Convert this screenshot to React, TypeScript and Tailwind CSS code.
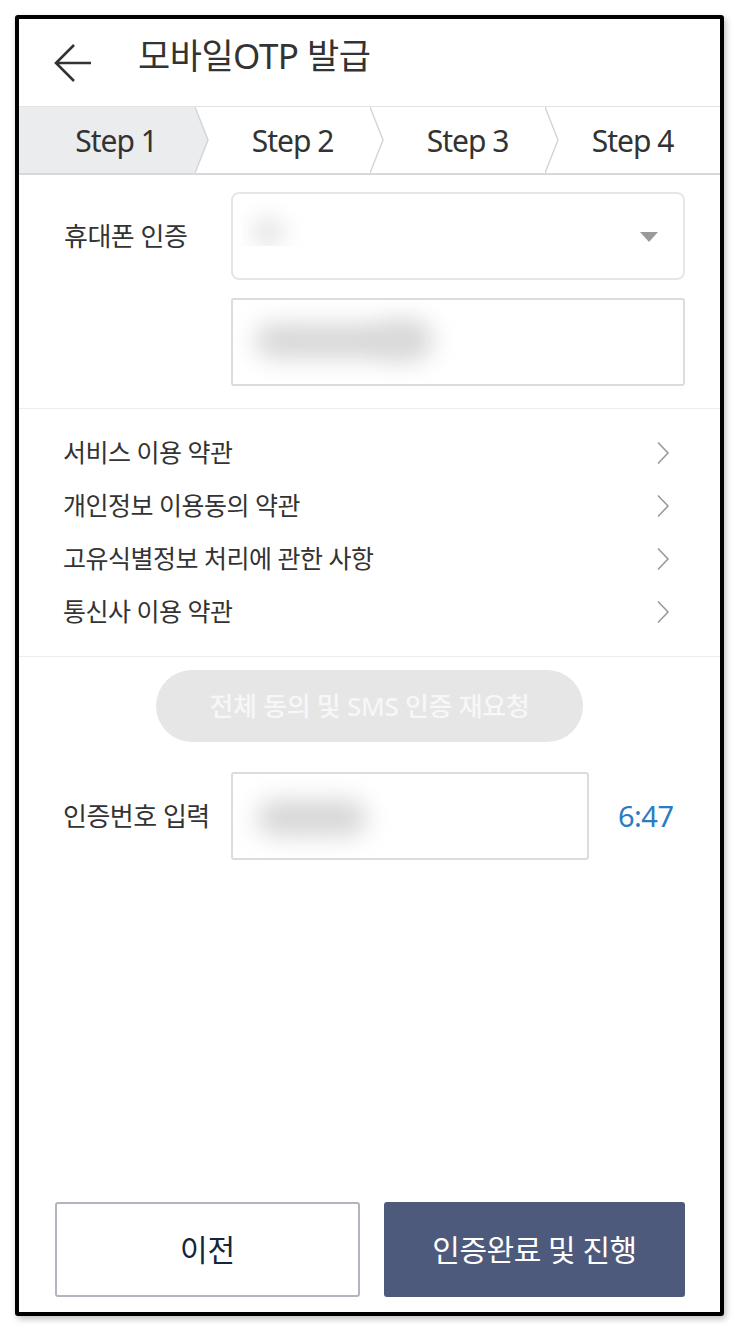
import { ReactNode } from "react";

const terms = [
  "서비스 이용 약관",
  "개인정보 이용동의 약관",
  "고유식별정보 처리에 관한 사항",
  "통신사 이용 약관",
];

const steps = [
  { label: "Step 1", width: "w-[176px]", pad: "pl-[18px]", active: true },
  { label: "Step 2", width: "w-[175px]", pad: "pl-[20px]", active: false },
  { label: "Step 3", width: "w-[175px]", pad: "pl-[20px]", active: false },
  { label: "Step 4", width: "flex-1", pad: "pl-0", active: false },
];

function Chevron() {
  return (
    <svg width="14" height="24" viewBox="0 0 14 24" fill="none">
      <path d="M2 1.5 L12 12 L2 22.5" stroke="#9a9a9a" strokeWidth="1.6" />
    </svg>
  );
}

function Blur({ className }: { className: string }) {
  return <div className={`rounded-full bg-[#d6d6d6] blur-md ${className}`} />;
}

function Row({ label, children }: { label: string; children: ReactNode }) {
  return (
    <div className="flex items-center">
      <div className="w-[212px] shrink-0 pl-[45px] text-[26px] text-[#333] tracking-[-0.5px]">{label}</div>
      {children}
    </div>
  );
}

export default function App() {
  return (
    <div
      className="w-[741px] h-[1335px] bg-white pt-[15px] pl-[15px]"
      style={{ fontFamily: '"Noto Sans", "Noto Sans CJK KR", sans-serif' }}
    >
      <div className="w-[709px] h-[1301px] border-[4px] border-black rounded-[3px] shadow-[2px_3px_6px_rgba(0,0,0,0.25)] flex flex-col bg-white overflow-hidden">
        {/* header */}
        <div className="h-[88px] shrink-0 flex items-center border-b border-[#e3e3e3]">
          <svg width="40" height="40" viewBox="0 0 40 40" fill="none" className="ml-[34px]">
            <path d="M38 20 H3 M21 2 L3 20 L21 38" stroke="#333" strokeWidth="2.6" />
          </svg>
          <h1 className="ml-[45px] text-[35px] leading-none text-[#333] tracking-[-0.5px] -mt-[14px]">
            모바일OTP 발급
          </h1>
        </div>

        {/* steps */}
        <div className="h-[68px] shrink-0 flex border-b-2 border-[#d6d8dc]">
          {steps.map((s, i) => (
            <div
              key={s.label}
              className={`relative ${s.width} ${s.pad} flex items-center justify-center text-[30px] tracking-[-1px] text-[#333] ${s.active ? "bg-[#ebecee]" : "bg-white"}`}
            >
              {s.label}
              {i < steps.length - 1 && (
                <svg
                  width="14"
                  height="66"
                  viewBox="0 0 14 66"
                  className="absolute top-0 -right-[14px] z-10"
                >
                  <polygon points="0,0 13,33 0,66" fill={s.active ? "#ebecee" : "#ffffff"} />
                  <polyline points="0,0 13,33 0,66" fill="none" stroke="#d3d5da" strokeWidth="1.5" />
                </svg>
              )}
            </div>
          ))}
        </div>

        {/* phone */}
        <div className="pt-[17px] pb-[22px] flex flex-col gap-[18px] border-b border-[#ececec]">
          <Row label="휴대폰 인증">
            <div className="relative w-[454px] h-[88px] rounded-[8px] border-2 border-[#e6e6e6] flex items-start">
              <div className="mt-[6px] ml-[8px] w-[122px] h-[46px] bg-white relative overflow-hidden">
                <Blur className="absolute left-[14px] top-[20px] w-[26px] h-[24px]" />
              </div>
              <svg width="18" height="10" viewBox="0 0 18 10" className="absolute right-[25px] top-[38px]">
                <polygon points="0,0 18,0 9,10" fill="#9a9a9a" />
              </svg>
            </div>
          </Row>
          <Row label="">
            <div className="relative w-[454px] h-[88px] rounded-[3px] border-2 border-[#dcdcdc] overflow-hidden">
              <Blur className="absolute left-[22px] top-[24px] w-[150px] h-[34px]" />
              <Blur className="absolute left-[150px] top-[20px] w-[50px] h-[40px]" />
            </div>
          </Row>
        </div>

        {/* terms */}
        <div className="pt-[17px] pb-[18px] border-b border-[#ececec]">
          {terms.map((t) => (
            <div key={t} className="h-[53px] flex items-center justify-between pl-[44px] pr-[50px]">
              <span className="text-[25px] text-[#333] tracking-[-0.5px]">{t}</span>
              <Chevron />
            </div>
          ))}
        </div>

        {/* resend */}
        <div className="pt-[13px] flex justify-center">
          <button className="w-[427px] h-[72px] rounded-full bg-[#e6e6e6] text-[26px] font-medium text-[#f7f7f7] tracking-[-0.3px]">
            전체 동의 및 SMS 인증 재요청
          </button>
        </div>

        {/* code */}
        <div className="pt-[30px]">
          <div className="flex items-center">
            <div className="w-[212px] shrink-0 pl-[44px] text-[26px] text-[#333] tracking-[-0.5px]">인증번호 입력</div>
            <div className="relative w-[358px] h-[88px] rounded-[3px] border-2 border-[#dcdcdc] overflow-hidden">
              <Blur className="absolute left-[24px] top-[26px] w-[110px] h-[36px]" />
            </div>
            <span className="ml-[29px] text-[29px] text-[#2a7bc4] tracking-[-0.5px]">6:47</span>
          </div>
        </div>

        <div className="flex-1" />

        {/* bottom buttons */}
        <div className="flex gap-[24px] pl-[36px] pr-[35px] pb-[15px]">
          <button className="flex-1 h-[95px] rounded-[3px] border-2 border-[#b1b6be] bg-white text-[30px] text-[#13263a]">
            이전
          </button>
          <button className="flex-1 h-[95px] rounded-[3px] bg-[#4e5a7b] text-[30px] text-white tracking-[-0.5px]">
            인증완료 및 진행
          </button>
        </div>
      </div>
    </div>
  );
}
